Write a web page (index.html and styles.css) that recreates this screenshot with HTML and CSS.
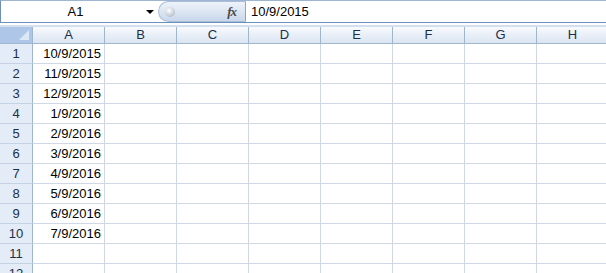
FILE: index.html
```html
<!DOCTYPE html>
<html lang="en">
<head>
    <meta charset="UTF-8">
    <title>Sheet1</title>
    <link rel="stylesheet" href="styles.css">
</head>
<body>
    <div class="formula-bar">
        <div class="name-box">
            <span class="cell-ref">A1</span>
            <span class="arrow"></span>
        </div>
        <div class="fx-pill">
            <span class="knob"></span>
            <span class="fx"><i>f</i><i>x</i></span>
        </div>
        <div class="formula-input">10/9/2015</div>
    </div>
    <div class="spacer"></div>

    <div class="sheet">
        <div class="corner"><span class="tri"></span></div>
        <div class="col-head">A</div>
        <div class="col-head">B</div>
        <div class="col-head">C</div>
        <div class="col-head">D</div>
        <div class="col-head">E</div>
        <div class="col-head">F</div>
        <div class="col-head">G</div>
        <div class="col-head">H</div>
    </div>
    <div class="sheet" id="rows"></div>

    <script>
        const dates = ['10/9/2015', '11/9/2015', '12/9/2015', '1/9/2016', '2/9/2016',
                       '3/9/2016', '4/9/2016', '5/9/2016', '6/9/2016', '7/9/2016', '', ''];
        const rows = document.getElementById('rows');
        dates.forEach((d, i) => {
            const head = document.createElement('div');
            head.className = 'row-head';
            head.innerText = i + 1;
            rows.appendChild(head);
            for (let c = 0; c < 8; c++) {
                const cell = document.createElement('div');
                cell.className = 'cell';
                if (c === 0) cell.innerText = d;
                rows.appendChild(cell);
            }
        });
    </script>
</body>
</html>
```

FILE: styles.css
```css
body {
    margin: 0;
    font-family: "Liberation Sans", Arial, sans-serif;
    font-size: 13px;
    background-color: white;
    overflow: hidden;
}
.formula-bar {
    display: flex;
    height: 21px;
    border-top: 1px solid #9fb5d2;
    border-bottom: 1px solid #6f8fbb;
    border-left: 1px solid #6f8fbb;
}
.name-box {
    width: 157px;
    display: flex;
    align-items: center;
    position: relative;
}
.cell-ref {
    flex: 1;
    text-align: center;
    color: #000;
    padding-left: 4px;
}
.arrow {
    width: 0;
    height: 0;
    border-left: 4px solid transparent;
    border-right: 4px solid transparent;
    border-top: 4px solid #000;
    margin-right: 4px;
}
.fx-pill {
    width: 88px;
    display: flex;
    align-items: center;
    justify-content: space-between;
    border-radius: 11px 0 0 11px;
    border: 1px solid #a9bed8;
    border-right: 1px solid #8aa5c9;
    box-sizing: border-box;
    background: linear-gradient(#eef3fa, #dce6f3 50%, #c9d8ec);
}
.knob {
    width: 10px;
    height: 10px;
    border-radius: 50%;
    margin-left: 6px;
    background: radial-gradient(circle at 40% 35%, #ffffff, #c6cdd6 60%, #9aa4b0);
}
.fx {
    font-family: "Liberation Serif", serif;
    font-size: 13px;
    font-weight: bold;
    color: #4a4a4a;
    margin-right: 9px;
}
.fx i {
    letter-spacing: -1px;
}
.formula-input {
    flex: 1;
    display: flex;
    align-items: center;
    padding-left: 5px;
    color: #000;
}
.spacer {
    height: 2px;
    border-bottom: 2px solid #d4e0ef;
    margin-bottom: 0;
}
.sheet {
    display: grid;
    grid-template-columns: 33px repeat(8, 72px);
}
.corner {
    height: 16px;
    background-color: #aec6e8;
    border-right: 1px solid #9eb6ce;
    border-bottom: 1px solid #9eb6ce;
    position: relative;
}
.tri {
    position: absolute;
    right: 3px;
    bottom: 3px;
    width: 0;
    height: 0;
    border-left: 10px solid transparent;
    border-bottom: 10px solid #dde8f6;
}
.col-head {
    height: 16px;
    line-height: 16px;
    text-align: center;
    color: #1b2f4b;
    background: linear-gradient(#f8fafd, #e6edf7 60%, #dbe4f1);
    border-right: 1px solid #9eb6ce;
    border-bottom: 1px solid #9eb6ce;
}
.row-head {
    height: 19px;
    line-height: 19px;
    text-align: center;
    color: #1b2f4b;
    background-color: #e4ecf7;
    border-right: 1px solid #9eb6ce;
    border-bottom: 1px solid #c5d2e3;
}
.cell {
    height: 19px;
    line-height: 19px;
    text-align: right;
    padding-right: 3px;
    color: #000;
    border-right: 1px solid #d0d7e5;
    border-bottom: 1px solid #d0d7e5;
}
```
